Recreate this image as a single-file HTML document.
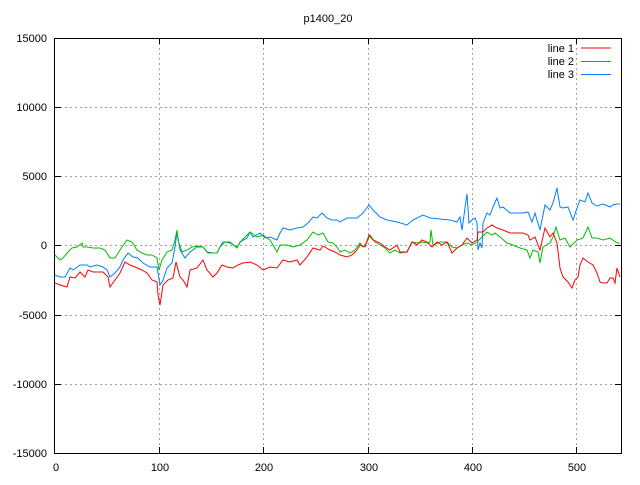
<!DOCTYPE html>
<html><head><style>
html,body{margin:0;padding:0;background:#fff;}
svg text{font-family:"Liberation Sans",sans-serif;font-size:11px;fill:#000;}
</style></head><body>
<svg width="640" height="480" viewBox="0 0 640 480" xmlns="http://www.w3.org/2000/svg">
<rect width="640" height="480" fill="#fff"/>
<g stroke="#a0a0a0" stroke-width="1" stroke-dasharray="2,3" fill="none">
<path d="M55 107.5H621M55 176.5H621M55 245.5H621M55 315.5H621M55 384.5H621"/>
<path d="M159.5 38V453M263.5 38V453M368.5 38V453M472.5 38V453M576.5 38V453"/>
</g>
<g stroke="#000" stroke-width="1" fill="none">
<rect x="54.5" y="38.5" width="567" height="415"/>
<path d="M55 107.5h6M55 176.5h6M55 245.5h6M55 315.5h6M55 384.5h6M621 107.5h-6M621 176.5h-6M621 245.5h-6M621 315.5h-6M621 384.5h-6"/>
<path d="M159.5 453v-6M263.5 453v-6M368.5 453v-6M472.5 453v-6M576.5 453v-6M159.5 38v6M263.5 38v6M368.5 38v6M472.5 38v6M576.5 38v6"/>
</g>
<g text-anchor="end">
<text x="47" y="42">15000</text><text x="47" y="111">10000</text><text x="47" y="180">5000</text>
<text x="47" y="249">0</text><text x="47" y="319">-5000</text><text x="47" y="388">-10000</text><text x="47" y="457">-15000</text>
</g>
<g text-anchor="middle">
<text x="56" y="471">0</text><text x="160" y="471">100</text><text x="264" y="471">200</text>
<text x="369" y="471">300</text><text x="473" y="471">400</text><text x="577" y="471">500</text>
<text x="328" y="22">p1400_20</text>
</g>
<g text-anchor="end">
<text x="574" y="52">line 1</text><text x="574" y="65">line 2</text><text x="574" y="78">line 3</text>
</g>
<path d="M581 48h30" stroke="#ff0000"/>
<path d="M581 61.5h30" stroke="#00c000"/>
<path d="M581 74.5h30" stroke="#0080ff"/>
<g fill="none" stroke-width="1">
<polyline stroke="#0080ff" points="55,275 60,277 65,277 70,268 73,270 80,265 87,265 90,267 97,265 103,267 107,270 110,277 115,273 120,267 123,260 128,253 133,257 138,258 143,263 150,267 157,267 160,285 163,280 167,268 172,263 175,247 177,232 180,250 185,258 190,252 197,247 203,247 207,252 213,253 217,253 220,247 223,242 230,242 237,248 240,242 247,238 250,232 253,237 260,233 265,238 270,237 277,240 280,233 283,228 290,230 297,228 303,227 308,223 313,217 317,218 322,213 327,218 332,220 337,220 340,222 347,218 357,218 363,213 369,205 373,210 380,217 387,220 397,222 407,225 413,220 423,215 430,218 440,219 450,220 457,222 460,217 462,230 465,208 467,194 469,223 472,220 475,218 477,223 478,250 480,243 482,248 483,223 487,213 490,215 493,207 497,198 500,208 503,207 510,213 517,213 523,213 528,212 532,222 535,213 540,230 545,205 550,210 553,203 557,188 560,207 563,208 568,207 573,220 577,208 580,200 585,202 588,193 592,203 597,206 603,204 610,207 613,205 617,204 620,204"/>
<polyline stroke="#00c000" points="55,255 60,260 63,258 68,252 72,248 77,247 82,243 83,247 88,247 93,248 100,248 105,250 110,258 115,258 120,250 127,240 132,242 137,250 142,253 147,255 152,255 157,258 159,270 162,260 167,252 172,250 175,240 177,230 178,240 182,252 187,250 192,247 198,246 203,247 208,253 217,253 220,247 225,242 230,243 237,247 242,240 250,232 257,237 263,235 270,240 277,252 280,245 287,245 293,247 300,245 307,240 313,232 318,235 323,233 328,242 333,243 337,247 340,252 345,250 350,253 355,250 360,243 363,247 367,242 370,235 375,242 380,245 385,248 390,253 395,250 400,253 407,252 412,242 417,243 422,242 427,243 430,242 431,230 433,245 440,242 447,242 452,247 457,248 462,245 467,243 472,245 477,242 482,237 487,232 492,235 495,233 500,237 507,243 513,245 520,248 527,250 530,258 533,250 538,252 540,263 543,247 550,243 553,237 556,227 560,240 565,238 570,247 577,240 583,238 588,227 592,238 597,238 603,240 610,238 617,243 620,243"/>
<polyline stroke="#ff0000" points="55,283 60,285 67,287 70,277 75,278 80,272 85,277 88,270 93,272 103,272 108,277 110,287 115,280 120,273 125,262 130,265 135,267 142,270 147,273 152,280 157,282 158,295 160,305 163,285 168,280 173,278 176,262 180,277 183,280 187,287 190,270 197,268 203,260 207,270 213,277 217,273 222,265 227,267 233,268 238,265 243,263 250,262 257,265 263,270 270,267 277,268 283,260 290,262 297,260 300,265 307,257 313,248 320,250 323,246 330,250 335,252 340,255 347,257 352,255 357,250 360,245 365,247 369,235 373,240 380,243 385,247 390,250 397,245 400,252 407,252 412,242 417,245 422,240 427,242 432,247 437,242 442,245 447,242 452,253 457,248 462,245 467,238 472,243 477,240 478,232 483,232 487,228 492,225 497,228 503,230 510,233 517,233 523,233 528,235 530,240 535,237 540,250 545,228 550,237 553,233 557,243 560,268 563,277 568,282 572,288 575,280 578,277 580,265 583,258 588,262 593,265 597,273 600,282 603,283 607,283 610,278 613,278 615,283 617,268 620,277"/>
</g>
</svg>
</body></html>
